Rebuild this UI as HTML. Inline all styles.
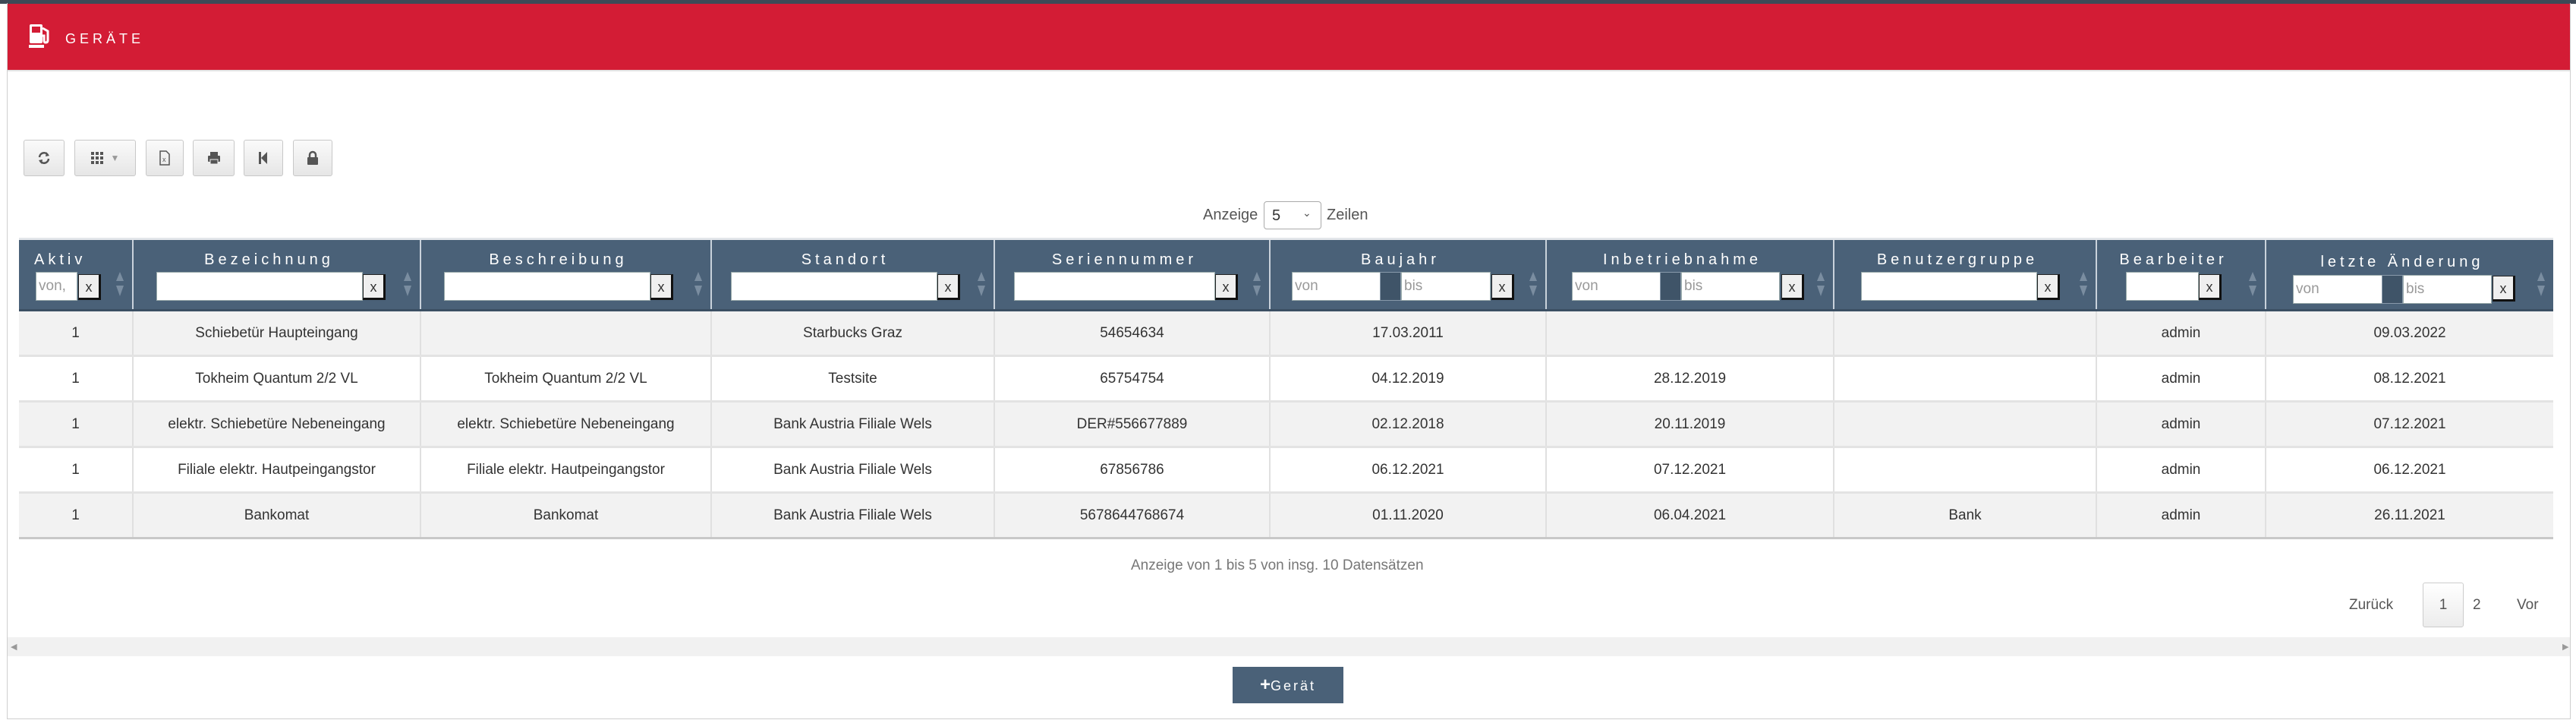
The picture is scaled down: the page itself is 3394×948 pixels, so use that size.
<!DOCTYPE html>
<html><head><meta charset="utf-8"><style>
*{box-sizing:border-box;margin:0;padding:0}
body{width:3394px;height:948px;background:#fff;font-family:"Liberation Sans",sans-serif;position:relative;overflow:hidden}
.abs{position:absolute}
#topline{left:0;top:0;width:3394px;height:5px;background:#3d4a57}
#frame{left:9px;top:4px;width:3378px;height:943px;border:1px solid #cfcfcf;border-top:none}
#hdr{left:10px;top:5px;width:3376px;height:89px;background:#d31c35;border-bottom:2px solid #e3e3e3}
#title{left:86px;top:41px;color:#fff;font-size:18px;letter-spacing:5px}
.tb{position:absolute;top:184px;height:48px;border:1px solid #c8c8c8;border-radius:3px;background:linear-gradient(#fafafa,#e6e6e6);display:flex;align-items:center;justify-content:center;color:#444;font-size:17px}
table{position:absolute;left:25px;top:313px;width:3339px;border-collapse:collapse;table-layout:fixed;font-size:19px;color:#333}
th{background:#4a6178;color:#fff;font-weight:normal;height:94px;border-left:2px solid #c9d2db;border-top:3px solid #e3e6ea;border-bottom:3px solid #3b4f63;position:relative;vertical-align:top;letter-spacing:5px;font-size:20px}
th:first-child{border-left:none}
th .l{position:absolute;top:15px;left:0;right:20px;text-align:center}
th .f{position:absolute;top:42px;height:38px;background:#fff;border:1px solid #9aa}
th .x{position:absolute;top:45px;width:30px;height:34px;background:#efefef;border:1px solid #222;border-right:3px solid #111;border-bottom:3px solid #111;color:#333;font-size:18px;letter-spacing:0;text-align:center;line-height:32px}
th .p{color:#999;font-size:19px;letter-spacing:0;line-height:36px;padding-left:3px;text-align:left}
th .s{position:absolute;top:40px;right:10px;width:12px;height:36px}
td{height:60px;text-align:center;border-left:2px solid #e0e0e0;border-top:3px solid #e3e3e3}
td:first-child{border-left:none}
tr:nth-child(odd) td{background:#f2f2f2}
tr:nth-child(even) td{background:#fff}
tbody tr:last-child td{border-bottom:3px solid #c8c8c8}
</style></head><body>
<div id="topline" class="abs"></div>
<div id="frame" class="abs"></div>
<div id="hdr" class="abs"></div>
<svg class="abs" style="left:38px;top:31px" width="32" height="33" viewBox="0 0 32 33"><rect x="1" y="1" width="17" height="25" rx="2" fill="#fff"/><rect x="4" y="4" width="11" height="8" fill="#d31c35"/><rect x="0" y="28" width="20" height="4" fill="#fff"/><path d="M18 6 L25 10 V22 Q25 25 22 25 Q20 25 20 22 V16 H18" stroke="#fff" stroke-width="3" fill="none"/></svg>
<div id="title" class="abs">GERÄTE</div>

<div class="tb" style="left:31px;width:54px">
<svg width="18" height="20" viewBox="0 0 18 20"><path d="M3 9 A6 6 0 0 1 14 6 M15 11 A6 6 0 0 1 4 14" stroke="#555" stroke-width="2.5" fill="none"/><path d="M12 2 L16 7 L11 8Z M6 18 L2 13 L7 12Z" fill="#555"/></svg></div>
<div class="tb" style="left:98px;width:81px;gap:10px">
<svg width="16" height="16"><g fill="#555"><rect x="0" y="0" width="4" height="4"/><rect x="6" y="0" width="4" height="4"/><rect x="12" y="0" width="4" height="4"/><rect x="0" y="6" width="4" height="4"/><rect x="6" y="6" width="4" height="4"/><rect x="12" y="6" width="4" height="4"/><rect x="0" y="12" width="4" height="4"/><rect x="6" y="12" width="4" height="4"/><rect x="12" y="12" width="4" height="4"/></g></svg><span style="color:#999;font-size:12px">▼</span></div>
<div class="tb" style="left:192px;width:50px"><svg width="14" height="20"><path d="M1 1 H9 L13 5 V19 H1Z" fill="none" stroke="#555" stroke-width="1.5"/><text x="4" y="15" font-size="9" fill="#555" font-family="Liberation Sans">x</text></svg></div>
<div class="tb" style="left:254px;width:55px"><svg width="18" height="18"><rect x="4" y="1" width="10" height="5" fill="#555"/><rect x="1" y="6" width="16" height="8" rx="1" fill="#555"/><rect x="4" y="11" width="10" height="6" fill="#555" stroke="#eee" stroke-width="1"/></svg></div>
<div class="tb" style="left:321px;width:52px"><svg width="12" height="18"><rect x="0" y="1" width="3" height="16" fill="#555"/><path d="M11 1 V17 L3 9Z" fill="#555"/></svg></div>
<div class="tb" style="left:386px;width:52px"><svg width="14" height="20"><path d="M3 9 V6 A4 4 0 0 1 11 6 V9" stroke="#555" stroke-width="2.5" fill="none"/><rect x="0" y="9" width="14" height="10" rx="1" fill="#555"/></svg></div>

<div class="abs" style="left:1585px;top:272px;font-size:20px;color:#555">Anzeige</div>
<div class="abs" style="left:1665px;top:265px;width:76px;height:37px;border:1px solid #aaa;border-radius:4px;font-size:20px;color:#333;padding:7px 0 0 10px">5<span style="position:absolute;left:50px;top:6px;font-size:14px;color:#555">⌄</span></div>
<div class="abs" style="left:1748px;top:272px;font-size:20px;color:#555">Zeilen</div>

<table>
<colgroup><col style="width:150px"><col style="width:379px"><col style="width:383px"><col style="width:373px"><col style="width:363px"><col style="width:364px"><col style="width:379px"><col style="width:346px"><col style="width:223px"><col style="width:379px"></colgroup>
<thead><tr>
<th><div class="l" style="text-align:left;left:20px">Aktiv</div><div class="f p" style="left:22px;width:55px">von,</div><div class="x" style="left:78px">x</div><svg class="s" viewBox="0 0 12 36"><path d="M6 2 L11 14 H1Z M6 34 L11 20 H1Z" fill="#7a8da0"/></svg></th>
<th><div class="l">Bezeichnung</div><div class="f" style="left:30px;width:272px"></div><div class="x" style="left:302px">x</div><svg class="s" viewBox="0 0 12 36"><path d="M6 2 L11 14 H1Z M6 34 L11 20 H1Z" fill="#7a8da0"/></svg></th>
<th><div class="l">Beschreibung</div><div class="f" style="left:30px;width:272px"></div><div class="x" style="left:302px">x</div><svg class="s" viewBox="0 0 12 36"><path d="M6 2 L11 14 H1Z M6 34 L11 20 H1Z" fill="#7a8da0"/></svg></th>
<th><div class="l">Standort</div><div class="f" style="left:25px;width:272px"></div><div class="x" style="left:297px">x</div><svg class="s" viewBox="0 0 12 36"><path d="M6 2 L11 14 H1Z M6 34 L11 20 H1Z" fill="#7a8da0"/></svg></th>
<th><div class="l">Seriennummer</div><div class="f" style="left:25px;width:265px"></div><div class="x" style="left:290px">x</div><svg class="s" viewBox="0 0 12 36"><path d="M6 2 L11 14 H1Z M6 34 L11 20 H1Z" fill="#7a8da0"/></svg></th>
<th><div class="l">Baujahr</div><div class="f p" style="left:28px;width:117px">von</div><div class="f" style="left:144px;width:28px;background:#3f5468;border-color:#8899aa"></div><div class="f p" style="left:172px;width:118px">bis</div><div class="x" style="left:291px">x</div><svg class="s" viewBox="0 0 12 36"><path d="M6 2 L11 14 H1Z M6 34 L11 20 H1Z" fill="#7a8da0"/></svg></th>
<th><div class="l">Inbetriebnahme</div><div class="f p" style="left:33px;width:117px">von</div><div class="f" style="left:149px;width:28px;background:#3f5468;border-color:#8899aa"></div><div class="f p" style="left:177px;width:130px">bis</div><div class="x" style="left:309px">x</div><svg class="s" viewBox="0 0 12 36"><path d="M6 2 L11 14 H1Z M6 34 L11 20 H1Z" fill="#7a8da0"/></svg></th>
<th><div class="l">Benutzergruppe</div><div class="f" style="left:35px;width:232px"></div><div class="x" style="left:267px">x</div><svg class="s" viewBox="0 0 12 36"><path d="M6 2 L11 14 H1Z M6 34 L11 20 H1Z" fill="#7a8da0"/></svg></th>
<th><div class="l">Bearbeiter</div><div class="f" style="left:38px;width:96px"></div><div class="x" style="left:134px">x</div><svg class="s" viewBox="0 0 12 36"><path d="M6 2 L11 14 H1Z M6 34 L11 20 H1Z" fill="#7a8da0"/></svg></th>
<th><div class="l" style="top:18px">letzte Änderung</div><div class="f p" style="left:35px;width:118px;top:46px">von</div><div class="f" style="left:152px;width:28px;top:46px;background:#3f5468;border-color:#8899aa"></div><div class="f p" style="left:180px;width:117px;top:46px">bis</div><div class="x" style="left:298px;top:47px">x</div><svg class="s" viewBox="0 0 12 36"><path d="M6 2 L11 14 H1Z M6 34 L11 20 H1Z" fill="#7a8da0"/></svg></th>
</tr></thead>
<tbody>
<tr><td>1</td><td>Schiebetür Haupteingang</td><td></td><td>Starbucks Graz</td><td>54654634</td><td>17.03.2011</td><td></td><td></td><td>admin</td><td>09.03.2022</td></tr>
<tr><td>1</td><td>Tokheim Quantum 2/2 VL</td><td>Tokheim Quantum 2/2 VL</td><td>Testsite</td><td>65754754</td><td>04.12.2019</td><td>28.12.2019</td><td></td><td>admin</td><td>08.12.2021</td></tr>
<tr><td>1</td><td>elektr. Schiebetüre Nebeneingang</td><td>elektr. Schiebetüre Nebeneingang</td><td>Bank Austria Filiale Wels</td><td>DER#556677889</td><td>02.12.2018</td><td>20.11.2019</td><td></td><td>admin</td><td>07.12.2021</td></tr>
<tr><td>1</td><td>Filiale elektr. Hautpeingangstor</td><td>Filiale elektr. Hautpeingangstor</td><td>Bank Austria Filiale Wels</td><td>67856786</td><td>06.12.2021</td><td>07.12.2021</td><td></td><td>admin</td><td>06.12.2021</td></tr>
<tr><td>1</td><td>Bankomat</td><td>Bankomat</td><td>Bank Austria Filiale Wels</td><td>5678644768674</td><td>01.11.2020</td><td>06.04.2021</td><td>Bank</td><td>admin</td><td>26.11.2021</td></tr>
</tbody></table>

<div class="abs" style="left:1490px;top:734px;font-size:19px;color:#777">Anzeige von 1 bis 5 von insg. 10 Datensätzen</div>
<div class="abs" style="left:3095px;top:786px;font-size:19px;color:#555">Zurück</div>
<div class="abs" style="left:3192px;top:767px;width:54px;height:59px;border:1px solid #ccc;border-radius:3px;background:linear-gradient(#fff,#ececec);font-size:19px;color:#555;text-align:center;line-height:57px">1</div>
<div class="abs" style="left:3258px;top:786px;font-size:19px;color:#555">2</div>
<div class="abs" style="left:3316px;top:786px;font-size:19px;color:#555">Vor</div>
<div class="abs" style="left:10px;top:839px;width:3376px;height:25px;background:#f1f1f1"></div>
<div class="abs" style="left:14px;top:845px;font-size:11px;color:#999">◀</div>
<div class="abs" style="left:3376px;top:845px;font-size:11px;color:#999">▶</div>
<div class="abs" style="left:1624px;top:878px;width:146px;height:48px;background:#4a6178;color:#fff;font-size:18px;letter-spacing:3px;text-align:center;line-height:48px"><b style="font-size:24px;letter-spacing:0">+</b>Gerät</div>
</body></html>
